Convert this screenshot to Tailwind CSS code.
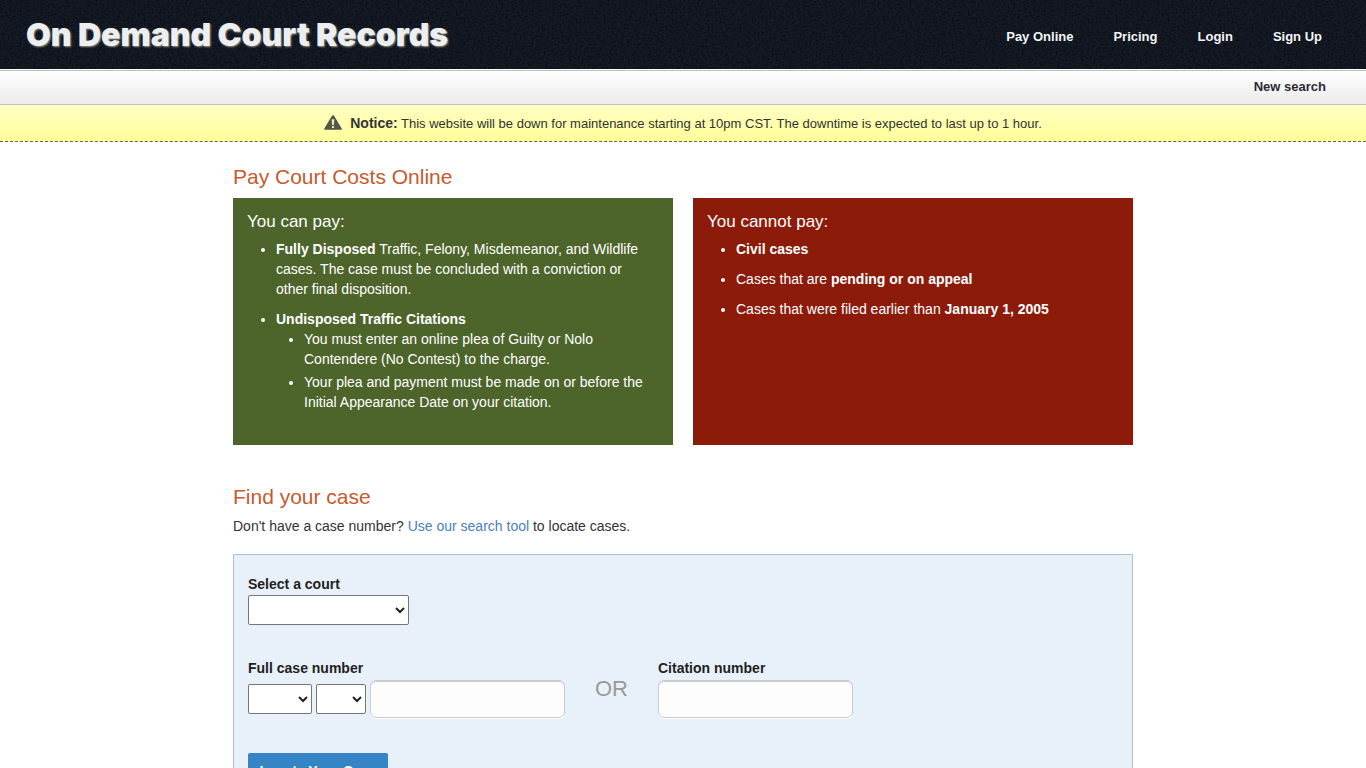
<!DOCTYPE html>
<html lang="en">
<head>
    <meta charset="UTF-8">
    <meta name="viewport" content="width=device-width, initial-scale=1.0">
    <title>Pay Court Costs Online - On Demand Court Records</title>
    <script src="https://cdn.jsdelivr.net/npm/@tailwindcss/browser@4"></script>
</head>
<body class="bg-white font-['Liberation_Sans',Arial,sans-serif] text-sm leading-5 text-[#333]">
    <!-- Header -->
    <header class="relative bg-[#0d121b] overflow-hidden">
        <svg class="absolute inset-0 w-full h-full opacity-5" aria-hidden="true">
            <filter id="grain">
                <feTurbulence type="fractalNoise" baseFrequency="0.5" numOctaves="3" seed="4" />
                <feColorMatrix type="matrix" values="1.6 0 0 0 -0.6  1.6 0 0 0 -0.6  1.6 0 0 0 -0.5  0 0 0 0 1" />
            </filter>
            <rect width="100%" height="100%" filter="url(#grain)" />
        </svg>
        <div class="relative h-[69px] flex items-center justify-between pl-[26px] pr-11">
            <a href="#" class="font-[Inter,sans-serif] font-black text-[32px] leading-10 text-[#eee] [text-shadow:1px_1px_2px_#998]">On Demand Court Records</a>
            <nav class="pt-1">
                <ul class="flex gap-10 text-[13px] font-bold text-[#f4f4f4]">
                    <li><a href="#" class="hover:underline">Pay Online</a></li>
                    <li><a href="#" class="hover:underline">Pricing</a></li>
                    <li><a href="#" class="hover:underline">Login</a></li>
                    <li><a href="#" class="hover:underline">Sign Up</a></li>
                </ul>
            </nav>
        </div>
    </header>

    <!-- Sub navigation -->
    <div class="mt-px h-[35px] border-y border-[#c0c0c8] bg-linear-to-b from-white to-[#ebebeb] flex items-center justify-end pr-10 pb-0.5">
        <a href="#" class="text-[13px] font-bold text-[#2b2b33]">New search</a>
    </div>

    <!-- Notice -->
    <div class="h-[37px] border-b border-dashed border-[#666644] bg-linear-to-b from-[#ffffc4] to-[#ffff98] flex items-center justify-center text-[13px]">
        <svg class="w-[18px] h-[15px] mr-2 mb-0.5" viewBox="0 0 18 15" aria-hidden="true">
            <path d="M9 0.2 Q9.7 0.2 10.2 1 L17.7 13.6 Q18.2 14.8 17 14.8 H1 Q-0.2 14.8 0.3 13.6 L7.8 1 Q8.3 0.2 9 0.2Z" fill="#555548" />
            <path d="M7.6 4.2 H10.4 L9.9 10 H8.1Z M7.9 11 H10.1 V13 H7.9Z" fill="#e8e8b0" />
        </svg>
        <p><strong class="text-sm">Notice:</strong> This website will be down for maintenance starting at 10pm CST. The downtime is expected to last up to 1 hour.</p>
    </div>

    <main class="max-w-[900px] mx-auto pt-[21px]">
        <h1 class="text-[21px] leading-7 text-[#c65a2e] mb-[7px]">Pay Court Costs Online</h1>

        <!-- Payment rules -->
        <div class="grid grid-cols-2 gap-5 text-white">
            <section class="bg-[#4d652b] px-3.5 pt-3 pb-[33px]">
                <h2 class="text-[17px] leading-6 mb-[5px]">You can pay:</h2>
                <ul class="list-disc pl-[29px] pr-2 space-y-2.5">
                    <li><strong>Fully Disposed</strong> Traffic, Felony, Misdemeanor, and Wildlife cases. The case must be concluded with a conviction or other final disposition.</li>
                    <li><strong>Undisposed Traffic Citations</strong>
                        <ul class="list-disc pl-7 space-y-[3px]">
                            <li>You must enter an online plea of Guilty or Nolo Contendere (No Contest) to the charge.</li>
                            <li>Your plea and payment must be made on or before the Initial Appearance Date on your citation.</li>
                        </ul>
                    </li>
                </ul>
            </section>
            <section class="bg-[#8c1b0a] px-3.5 pt-3 pb-[33px]">
                <h2 class="text-[17px] leading-6 mb-[5px]">You cannot pay:</h2>
                <ul class="list-disc pl-[29px] pr-2 space-y-2.5">
                    <li><strong>Civil cases</strong></li>
                    <li>Cases that are <strong>pending or on appeal</strong></li>
                    <li>Cases that were filed earlier than <strong>January 1, 2005</strong></li>
                </ul>
            </section>
        </div>

        <h1 class="text-[21px] leading-7 text-[#c65a2e] mt-[38px] mb-[5px]">Find your case</h1>
        <p>Don't have a case number? <a href="#" class="text-[#4a7fbb] hover:underline">Use our search tool</a> to locate cases.</p>

        <!-- Case lookup -->
        <form class="mt-[18px] border border-[#a9c1d3] bg-[#e8f1f9] px-3.5 pt-[19px] pb-8 text-[#222]">
            <label for="court" class="block font-bold">Select a court</label>
            <select id="court" class="block mt-px w-[161px] h-[30px] border border-[#767676] rounded-xs bg-white">
                <option></option>
            </select>

            <div class="flex items-start mt-[33px]">
                <div>
                    <label for="caseNumber" class="block font-bold">Full case number</label>
                    <div class="flex items-center gap-1 mt-0.5">
                        <select aria-label="Case type" class="w-16 h-[30px] border border-[#767676] rounded-xs bg-white">
                            <option></option>
                        </select>
                        <select aria-label="Case year" class="w-[50px] h-[30px] border border-[#767676] rounded-xs bg-white">
                            <option></option>
                        </select>
                        <input type="text" id="caseNumber" class="w-[195px] h-[38px] px-2 border border-[#ccc] rounded-md bg-[#fdfdfd] shadow-[inset_0_1px_0_#ccc,0_1px_0_#fff]">
                    </div>
                </div>
                <span class="mt-[19px] mx-[30px] text-[22px] leading-6 text-[#999]">OR</span>
                <div>
                    <label for="citationNumber" class="block font-bold">Citation number</label>
                    <input type="text" id="citationNumber" class="block mt-0.5 w-[195px] h-[38px] px-2 border border-[#ccc] rounded-md bg-[#fdfdfd] shadow-[inset_0_1px_0_#ccc,0_1px_0_#fff]">
                </div>
            </div>

            <button type="submit" class="block mt-[35px] h-9 w-[140px] rounded-xs bg-[#3584c6] text-sm font-bold text-white">Locate Your Case</button>
        </form>
    </main>
</body>
</html>
